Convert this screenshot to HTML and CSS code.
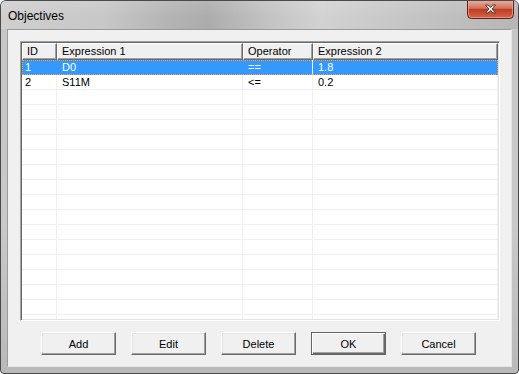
FILE: index.html
```html
<!DOCTYPE html>
<html>
<head>
<meta charset="utf-8">
<link rel="stylesheet" href="styles.css">
</head>
<body>
<div class="window">
  <div class="titlebar">
    <span class="title">Objectives</span>
    <div class="close">
      <svg width="47" height="19" viewBox="0 0 47 19">
        <defs>
          <linearGradient id="cg" x1="0" y1="0" x2="0" y2="1">
            <stop offset="0" stop-color="#e8b2a4"/>
            <stop offset="0.45" stop-color="#d2705a"/>
            <stop offset="0.5" stop-color="#c23a22"/>
            <stop offset="1" stop-color="#d8654a"/>
          </linearGradient>
        </defs>
        <path d="M0.5 0 V14.5 Q0.5 18.5 4.5 18.5 H42.5 Q46.5 18.5 46.5 14.5 V0" fill="url(#cg)" stroke="#5a2218"/>
        <path d="M1.5 0 V14 Q1.5 17.5 5 17.5 H42 Q45.5 17.5 45.5 14 V0" fill="none" stroke="#f0b8a8" stroke-opacity="0.6"/>
        <path d="M18.5 5 L21 5 L23.5 7.6 L26 5 L28.5 5 L25 9 L28.5 13 L26 13 L23.5 10.4 L21 13 L18.5 13 L22 9 Z" fill="#ffffff" stroke="#3a3a3a" stroke-width="1" stroke-linejoin="round"/>
      </svg>
    </div>
  </div>
  <div class="client">
    <div class="list">
      <div class="header">
        <div class="hcell">ID</div>
        <div class="hcell">Expression 1</div>
        <div class="hcell">Operator</div>
        <div class="hcell">Expression 2</div>
      </div>
      <div class="body">
        <div class="row selected"><div class="cell">1</div><div class="cell">D0</div><div class="cell">==</div><div class="cell">1.8</div></div>
        <div class="row"><div class="cell">2</div><div class="cell">S11M</div><div class="cell">&lt;=</div><div class="cell">0.2</div></div>
        <div class="row"><div class="cell"></div><div class="cell"></div><div class="cell"></div><div class="cell"></div></div>
        <div class="row"><div class="cell"></div><div class="cell"></div><div class="cell"></div><div class="cell"></div></div>
        <div class="row"><div class="cell"></div><div class="cell"></div><div class="cell"></div><div class="cell"></div></div>
        <div class="row"><div class="cell"></div><div class="cell"></div><div class="cell"></div><div class="cell"></div></div>
        <div class="row"><div class="cell"></div><div class="cell"></div><div class="cell"></div><div class="cell"></div></div>
        <div class="row"><div class="cell"></div><div class="cell"></div><div class="cell"></div><div class="cell"></div></div>
        <div class="row"><div class="cell"></div><div class="cell"></div><div class="cell"></div><div class="cell"></div></div>
        <div class="row"><div class="cell"></div><div class="cell"></div><div class="cell"></div><div class="cell"></div></div>
        <div class="row"><div class="cell"></div><div class="cell"></div><div class="cell"></div><div class="cell"></div></div>
        <div class="row"><div class="cell"></div><div class="cell"></div><div class="cell"></div><div class="cell"></div></div>
        <div class="row"><div class="cell"></div><div class="cell"></div><div class="cell"></div><div class="cell"></div></div>
        <div class="row"><div class="cell"></div><div class="cell"></div><div class="cell"></div><div class="cell"></div></div>
        <div class="row"><div class="cell"></div><div class="cell"></div><div class="cell"></div><div class="cell"></div></div>
        <div class="row"><div class="cell"></div><div class="cell"></div><div class="cell"></div><div class="cell"></div></div>
        <div class="row"><div class="cell"></div><div class="cell"></div><div class="cell"></div><div class="cell"></div></div>
        <div class="row"><div class="cell"></div><div class="cell"></div><div class="cell"></div><div class="cell"></div></div>
        <div class="row"><div class="cell"></div><div class="cell"></div><div class="cell"></div><div class="cell"></div></div>
      </div>
    </div>
    <div class="buttons">
      <div class="btn">Add</div>
      <div class="btn">Edit</div>
      <div class="btn">Delete</div>
      <div class="btn default">OK</div>
      <div class="btn">Cancel</div>
    </div>
  </div>
</div>
</body>
</html>
```
FILE: styles.css
```css
html, body {
  margin: 0;
  padding: 0;
  background: #ffffff;
}
.window {
  box-sizing: border-box;
  width: 519px;
  height: 374px;
  border: 1px solid #4a4a4a;
  border-radius: 6px 6px 4px 4px;
  background: linear-gradient(180deg, #c6c6c6 0%, #c9c9c9 60%, #b9b9b9 100%);
  display: flex;
  flex-direction: column;
  overflow: hidden;
  font-family: "Liberation Sans", Arial, sans-serif;
  font-size: 11px;
  color: #000;
}
.titlebar {
  height: 28px;
  flex: none;
  display: flex;
  justify-content: space-between;
  align-items: flex-start;
  padding: 0 4px 0 7px;
  background:
    linear-gradient(180deg, rgba(255,255,255,0.12) 0%, rgba(0,0,0,0) 60%),
    linear-gradient(90deg, #cfcfcf 0%, #c7c7c7 20%, #b3b3b3 33%, #acacac 40%, #c3c3c3 52%, #d2d2d2 62%, #c4c4c4 80%, #b6b6b6 100%);
}
.title {
  font-family: "Liberation Sans", Arial, sans-serif;
  font-size: 12px;
  line-height: 14px;
  margin-top: 8px;
  color: #000;
}
.close {
  margin-top: -1px;
  height: 19px;
  width: 47px;
}
.close svg {
  display: block;
}
.client {
  flex: 1;
  margin: 0 6px 6px 6px;
  border: 1px solid #8e8e8e;
  border-color: #9a9a9a #e6e6e6 #e6e6e6 #9a9a9a;
  background: #f0f0f0;
  display: flex;
  flex-direction: column;
  padding: 11px 11px 11px 12px;
  gap: 11px;
}
.list {
  box-sizing: border-box;
  width: 480px;
  height: 280px;
  flex: none;
  border: 1px solid;
  border-color: #a0a0a0 #ffffff #ffffff #a0a0a0;
  box-shadow: inset 1px 1px #696969, inset -1px -1px #e3e3e3;
  padding: 1px;
  background: #ffffff;
  display: flex;
  flex-direction: column;
  overflow: hidden;
}
.header, .row {
  display: grid;
  grid-template-columns: 35px 186px 70px 185px;
}
.header {
  height: 17px;
  flex: none;
}
.hcell {
  box-sizing: border-box;
  background: #f0f0f0;
  border: 1px solid;
  border-color: #ffffff #696969 #696969 #ffffff;
  box-shadow: inset -1px -1px #a0a0a0;
  padding-left: 4px;
  line-height: 14px;
  white-space: nowrap;
  overflow: hidden;
}
.body {
  flex: 1;
  overflow: hidden;
}
.row {
  height: 15px;
}
.cell {
  box-sizing: border-box;
  border-right: 1px solid #f0f0f0;
  border-bottom: 1px solid #f0f0f0;
  padding-left: 5px;
  line-height: 14px;
  white-space: nowrap;
}
.row .cell:first-child {
  padding-left: 3px;
}
.row.selected {
  background: #3399ff;
  color: #ffffff;
  outline: 1px dotted #ff9933;
  outline-offset: -1px;
}
.row.selected .cell {
  border-color: #3399ff;
}
.row.selected .cell:nth-child(3) {
  border-right-color: #eaf3ff;
}
.buttons {
  display: flex;
  gap: 15px;
  padding-left: 21px;
  height: 23px;
}
.btn {
  box-sizing: border-box;
  width: 75px;
  height: 23px;
  border: 1px solid;
  border-color: #ffffff #696969 #696969 #ffffff;
  box-shadow: inset -1px -1px #a0a0a0, inset 1px 1px #e3e3e3;
  background: #f0f0f0;
  display: flex;
  align-items: center;
  justify-content: center;
  line-height: 14px;
}
.btn.default {
  border: 1px solid #646464;
  box-shadow: inset 1px 1px #ffffff, inset -1px -1px #696969, inset -2px -2px #a0a0a0;
}
```
